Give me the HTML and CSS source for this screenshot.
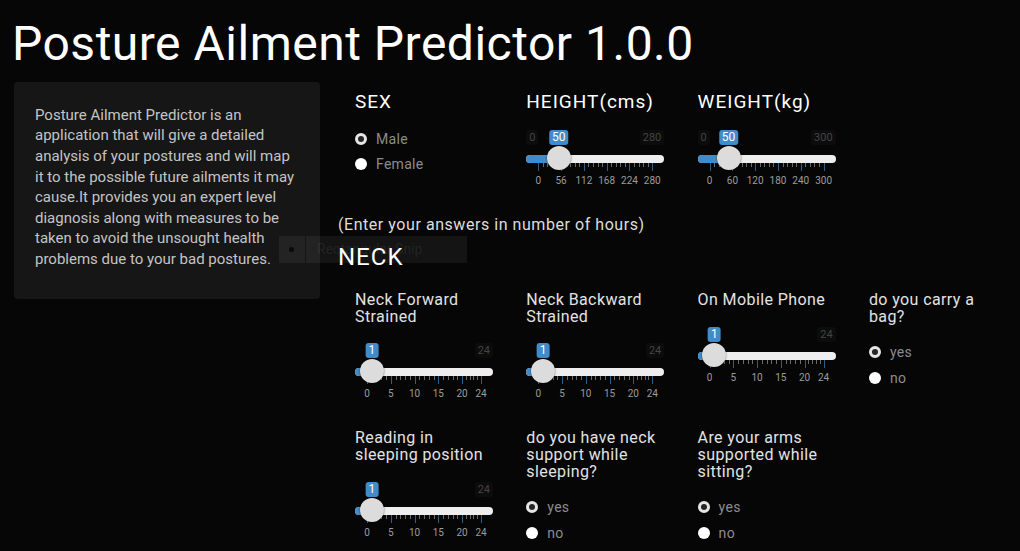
FILE: index.html
```html
<html>
<head>
    <link rel="stylesheet" href="styles.css">
    <title>Posture Ailment Predictor</title>
</head>
<body>
<div class="page">
    <h1 class="title">Posture Ailment Predictor 1.0.0</h1>

    <div class="layout">
        <!-- sidebar -->
        <div class="well">
            <p>Posture Ailment Predictor is an application that will give a detailed analysis of your postures and will map it to the possible future ailments it may cause.It provides you an expert level diagnosis along with measures to be taken to avoid the unsought health problems due to your bad postures.</p>
        </div>

        <!-- main panel -->
        <div class="main">
            <div class="row row-top">
                <div class="cell">
                    <h4 class="head">SEX</h4>
                    <div class="radios radios-sex">
                        <div class="radio"><span class="dot checked"></span>Male</div>
                        <div class="radio"><span class="dot"></span>Female</div>
                    </div>
                </div>
                <div class="cell">
                    <h4 class="head">HEIGHT(cms)</h4>
                    <div class="irs irs-top" data-min="0" data-max="280" data-from="50" data-ticks="0,56,112,168,224,280"></div>
                </div>
                <div class="cell">
                    <h4 class="head">WEIGHT(kg)</h4>
                    <div class="irs irs-top" data-min="0" data-max="300" data-from="50" data-ticks="0,60,120,180,240,300"></div>
                </div>
            </div>

            <p class="note">(Enter your answers in number of hours)</p>
            <h3 class="section">NECK</h3>

            <div class="row row-neck">
                <div class="cell">
                    <label class="field">Neck Forward Strained</label>
                    <div class="irs" data-min="0" data-max="24" data-from="1" data-ticks="0,5,10,15,20,24"></div>
                </div>
                <div class="cell">
                    <label class="field">Neck Backward Strained</label>
                    <div class="irs" data-min="0" data-max="24" data-from="1" data-ticks="0,5,10,15,20,24"></div>
                </div>
                <div class="cell">
                    <label class="field">On Mobile Phone</label>
                    <div class="irs" data-min="0" data-max="24" data-from="1" data-ticks="0,5,10,15,20,24"></div>
                </div>
                <div class="cell">
                    <label class="field">do you carry a bag?</label>
                    <div class="radios">
                        <div class="radio"><span class="dot checked"></span>yes</div>
                        <div class="radio"><span class="dot"></span>no</div>
                    </div>
                </div>
            </div>

            <div class="row row-last">
                <div class="cell">
                    <label class="field">Reading in sleeping position</label>
                    <div class="irs" data-min="0" data-max="24" data-from="1" data-ticks="0,5,10,15,20,24"></div>
                </div>
                <div class="cell">
                    <label class="field">do you have neck support while sleeping?</label>
                    <div class="radios">
                        <div class="radio"><span class="dot checked"></span>yes</div>
                        <div class="radio"><span class="dot"></span>no</div>
                    </div>
                </div>
                <div class="cell">
                    <label class="field">Are your arms supported while sitting?</label>
                    <div class="radios">
                        <div class="radio"><span class="dot checked"></span>yes</div>
                        <div class="radio"><span class="dot"></span>no</div>
                    </div>
                </div>
            </div>
        </div>
    </div>
</div>

<!-- snipping tool popup caught in the screenshot -->
<div class="snip"><span class="snip-dot"></span><span class="snip-text">Rectangular Snip</span></div>

<script src="script.js"></script>
</body>
</html>
```

FILE: styles.css
```css
body {
    margin: 0;
    background-color: #060606;
    color: #888;
    font-family: Roboto, "Liberation Sans", sans-serif;
}

.page {
    padding: 0 14px;
}

.title {
    margin: 18px 0 11px -2px;
    font-size: 48px;
    line-height: 52.8px;
    letter-spacing: 0.5px;
    font-weight: 400;
    color: #fff;
}

.layout {
    display: flex;
    align-items: flex-start;
}

/* sidebar */
.well {
    flex: 0 0 306px;
    box-sizing: border-box;
    padding: 23px 21px 29px 21px;
    background-color: #161616;
    border-radius: 4px;
}
.well p {
    margin: 0;
    font-size: 15px;
    line-height: 20.6px;
    color: #c4c4c4;
}

/* main panel */
.main {
    margin-left: 18px;
    flex: 1;
}

.row {
    display: grid;
    grid-template-columns: repeat(4, 171.3px);
    padding-left: 17px;
}
.cell {
    width: 140px;
}
.row-top { margin-top: 10.3px; }
.row-neck { margin-top: 21.5px; }
.row-last { margin-top: 30.2px; }

.head {
    margin: 0;
    font-size: 19px;
    line-height: 20.9px;
    letter-spacing: 1px;
    font-weight: 400;
    color: #fff;
}

.note {
    margin: 29.5px 0 0;
    font-size: 16px;
    line-height: 18px;
    letter-spacing: 0.55px;
    color: #ddd;
}
.section {
    margin: 10px 0 0;
    font-size: 24px;
    line-height: 26.4px;
    letter-spacing: 1px;
    font-weight: 400;
    color: #fff;
}

.field {
    display: block;
    font-size: 16px;
    line-height: 16.7px;
    letter-spacing: 0.4px;
    color: #e2e2e2;
}

/* radio buttons */
.radios {
    margin-top: 14px;
}
.radios-sex {
    margin-top: 13px;
}
.radio {
    display: flex;
    align-items: center;
    height: 25.5px;
    font-size: 14px;
    letter-spacing: 0.3px;
    color: #8c8c8c;
}
.dot {
    width: 12px;
    height: 12px;
    box-sizing: border-box;
    margin-right: 9px;
    border-radius: 50%;
    background-color: #fff;
}
.dot.checked {
    border: 3px solid #e6e6e6;
    background-color: #262626;
}

/* range slider */
.irs {
    position: relative;
    width: 138px;
    height: 57px;
    margin-top: 17.7px;
}
.irs-top {
    margin-top: 16.8px;
}
.irs-min,
.irs-max {
    position: absolute;
    top: 0;
    padding: 0 3px;
    font-size: 11px;
    line-height: 15px;
    color: #444;
    background-color: #0c0c0c;
    border-radius: 3px;
}
.irs-min { left: 0; }
.irs-max { right: 0; }
.irs-single {
    position: absolute;
    top: 0;
    padding: 0 3px;
    font-size: 12px;
    line-height: 15px;
    color: #fff;
    background-color: #428bca;
    border-radius: 3px;
    transform: translateX(-50%);
}
.irs-line {
    position: absolute;
    top: 25px;
    left: 0;
    right: 0;
    height: 8px;
    background-color: #eee;
    border-radius: 4px;
}
.irs-bar {
    position: absolute;
    top: 25px;
    left: 0;
    height: 8px;
    background-color: #428bca;
    border-radius: 4px 0 0 4px;
}
.irs-handle {
    position: absolute;
    top: 16px;
    width: 24px;
    height: 24px;
    border-radius: 50%;
    background-color: #dcdcdc;
    box-shadow: 0 0 2px rgba(0, 0, 0, 0.6);
}
.irs-grid {
    position: absolute;
    top: 33px;
    left: 0;
    right: 0;
    height: 24px;
}
.irs-pol {
    position: absolute;
    top: 0;
    width: 1px;
    height: 8px;
    background-color: #2f5d8a;
}
.irs-pol.small {
    height: 4px;
    background-color: #6a6a6a;
}
.irs-grid-text {
    position: absolute;
    top: 12px;
    font-size: 10px;
    line-height: 12px;
    color: #9c9c9c;
    transform: translateX(-50%);
}

/* snip popup */
.snip {
    position: absolute;
    left: 279px;
    top: 236px;
    width: 188px;
    height: 27px;
    display: flex;
    align-items: center;
    background-color: rgba(255, 255, 255, 0.06);
}
.snip-dot {
    width: 5px;
    height: 5px;
    margin: 0 11px 0 10px;
    border-radius: 50%;
    background-color: #0a0a0a;
}
.snip-text {
    height: 27px;
    padding-left: 11px;
    border-left: 1px solid rgba(0, 0, 0, 0.4);
    font-size: 14px;
    line-height: 27px;
    color: rgba(255, 255, 255, 0.08);
}
```

FILE: script.js
```js
// builds the ion.rangeSlider look for every .irs block
var sliders = document.querySelectorAll('.irs');

sliders.forEach(function(el)
{
    var min = Number(el.dataset.min);
    var max = Number(el.dataset.max);
    var from = Number(el.dataset.from);
    var ticks = el.dataset.ticks.split(',').map(Number);
    var pad = 12;
    var span = 138 - pad * 2;

    function pos(v)
    {
        return pad + (v - min) / (max - min) * span;
    }

    var html = '';
    if (pos(from) > 28)
    {
        html += '<span class="irs-min">' + min + '</span>';
    }
    html += '<span class="irs-max">' + max + '</span>';
    html += '<span class="irs-line"></span>';
    html += '<span class="irs-bar" style="width:' + pos(from) + 'px"></span>';

    html += '<span class="irs-grid">';
    for (var i = 0; i < ticks.length; i++)
    {
        var x = pos(ticks[i]);
        html += '<span class="irs-pol" style="left:' + x + 'px"></span>';
        html += '<span class="irs-grid-text" style="left:' + x + 'px">' + ticks[i] + '</span>';
        if (i < ticks.length - 1)
        {
            var next = pos(ticks[i + 1]);
            for (var k = 1; k < 5; k++)
            {
                var sx = x + (next - x) * k / 5;
                html += '<span class="irs-pol small" style="left:' + sx + 'px"></span>';
            }
        }
    }
    html += '</span>';

    html += '<span class="irs-single" style="left:' + pos(from) + 'px">' + from + '</span>';
    html += '<span class="irs-handle" style="left:' + (pos(from) - 12) + 'px"></span>';

    el.innerHTML = html;
});
```
